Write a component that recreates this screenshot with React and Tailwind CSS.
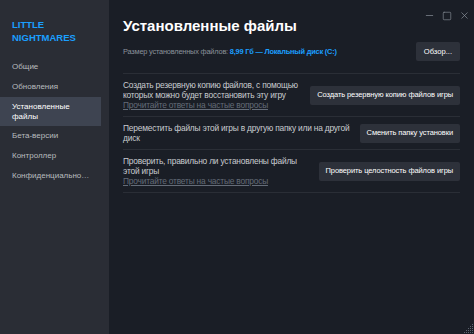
import { Minus, Square, X } from 'lucide-react';

const menu = ['Общие', 'Обновления', 'Установленные файлы', 'Бета-версии', 'Контроллер', 'Конфиденциальность'];

const rows = [
  {
    text: 'Создать резервную копию файлов, с помощью которых можно будет восстановить эту игру',
    link: true,
    width: 'w-[180px]',
    button: 'Создать резервную копию файлов игры',
  },
  {
    text: 'Переместить файлы этой игры в другую папку или на другой диск',
    link: false,
    width: 'w-[232px]',
    button: 'Сменить папку установки',
  },
  {
    text: 'Проверить, правильно ли установлены файлы этой игры',
    link: true,
    width: 'w-[180px]',
    button: 'Проверить целостность файлов игры',
  },
];

function Grip() {
  const dots = [];
  for (let r = 0; r < 5; r++) {
    for (let c = 0; c < 5; c++) {
      if (r + c >= 4) dots.push(<rect key={`${r}-${c}`} x={c * 2} y={r * 2} width="1" height="1" fill="#5d6470" />);
    }
  }
  return (
    <svg width="10" height="10" viewBox="0 0 10 10" className="absolute right-0 bottom-0">
      {dots}
    </svg>
  );
}

export default function App() {
  return (
    <div className="relative w-[474px] h-[334px] flex overflow-hidden bg-[#1a1e26] font-['Liberation_Sans',Arial,sans-serif] text-[#dcdedf]">
      {/* Sidebar */}
      <aside className="w-[109px] shrink-0 bg-[#2a2d35] pr-[8px] pt-[18px]">
        <div className="pl-[12px] text-[9.5px] leading-[13px] font-bold text-[#1a9fff] uppercase">
          Little<br />Nightmares
        </div>
        <nav className="mt-[13px] flex flex-col">
          {menu.map((item) =>
            item === 'Установленные файлы' ? (
              <div key={item} className="bg-[#3e4451] pl-[12px] py-[5px] text-[8px] leading-[9.5px] text-white">
                Установленные<br />файлы
              </div>
            ) : (
              <div key={item} className="pl-[12px] pr-[9px] py-[5px] text-[8px] leading-[10px] text-[#b8bcbf] truncate">
                {item}
              </div>
            )
          )}
        </nav>
      </aside>

      {/* Main */}
      <main className="flex-1 pl-[14px] pr-[14px] pt-[17px]">
        <h1 className="text-[15px] leading-[18px] font-bold text-white">Установленные файлы</h1>
        <div className="mt-[7px] flex items-center justify-between pb-[12px]">
          <p className="text-[7.4px] tracking-[-0.2px] text-[#8b929a]">
            Размер установленных файлов:{' '}
            <span className="text-[#1a9fff] font-bold">8,99 Гб — Локальный диск (C:)</span>
          </p>
          <button className="h-[19px] px-[8px] bg-[#2d313a] text-[7.6px] text-white rounded-[2px]">Обзор...</button>
        </div>

        <div className="border-t border-[#2a2e36]">
          {rows.map((row) => (
            <div key={row.button} className="flex items-center justify-between py-[6px] border-b border-[#2a2e36]">
              <div className={`${row.width} text-[8.4px] tracking-[-0.2px] leading-[10px] text-[#c9ccd0]`}>
                <p>{row.text}</p>
                {row.link && <a className="underline text-[#646c78]">Прочитайте ответы на частые вопросы</a>}
              </div>
              <button className="h-[19px] px-[7px] bg-[#2d313a] text-[7.5px] tracking-[-0.1px] text-white whitespace-nowrap rounded-[2px]">
                {row.button}
              </button>
            </div>
          ))}
        </div>
      </main>

      {/* Window controls */}
      <div className="absolute top-[10px] right-[4px] flex items-center gap-[7px] text-[#8b929a]">
        <Minus size={11} strokeWidth={1.5} />
        <Square size={10} strokeWidth={1.5} />
        <X size={11} strokeWidth={1.5} />
      </div>
      <Grip />
    </div>
  );
}
